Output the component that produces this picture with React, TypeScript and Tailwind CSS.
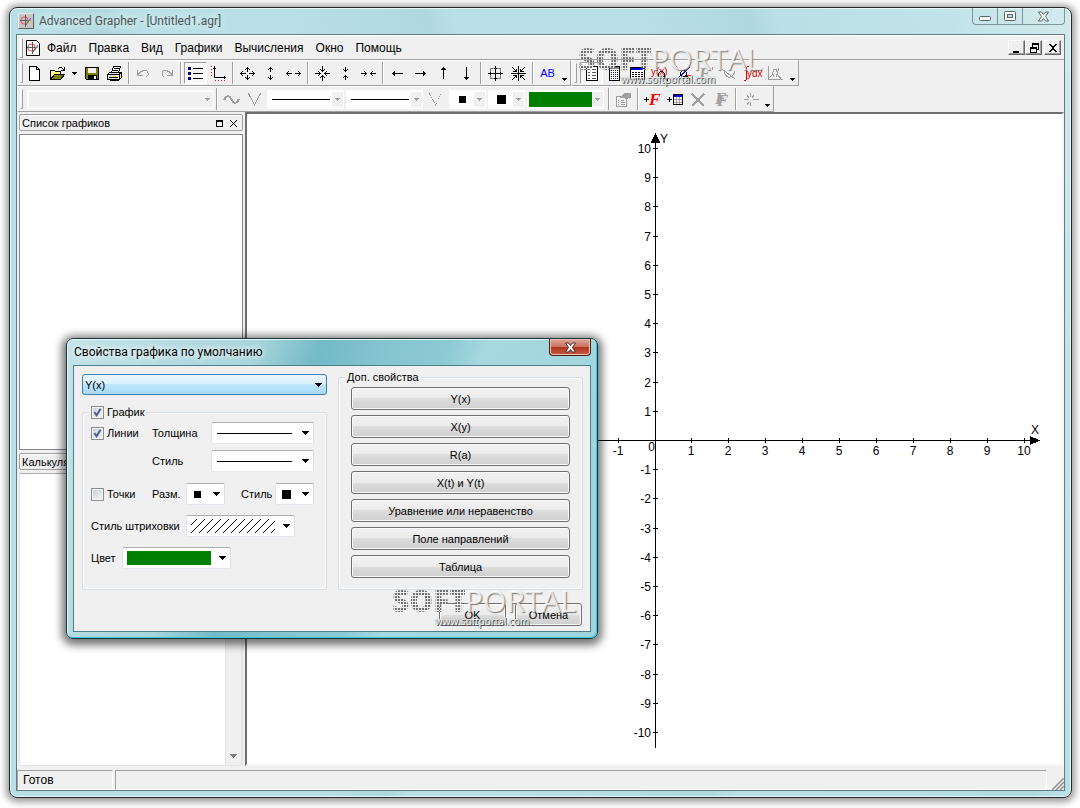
import { useId } from "react";
import type { ReactNode } from "react";

/* ---------- shared pieces ---------- */

function Icon({ children, w = 17, h = 17 }: { children: ReactNode; w?: number; h?: number }) {
  return (
    <svg width={w} height={h} viewBox={`0 0 ${w} ${h}`} fill="none" shapeRendering="crispEdges" aria-hidden="true" className="shrink-0 overflow-visible">
      {children}
    </svg>
  );
}

function Tool({ label, pressed, disabled, children }: { label: string; pressed?: boolean; disabled?: boolean; children: ReactNode }) {
  return (
    <button
      type="button"
      aria-label={label}
      aria-pressed={pressed}
      disabled={disabled}
      className={
        pressed
          ? "flex h-[22px] w-[23px] shrink-0 items-center justify-center border border-t-[#a0a0a0] border-r-white border-b-white border-l-[#a0a0a0] bg-[#f8f8f8]"
          : "flex h-[22px] w-[23px] shrink-0 items-center justify-center"
      }
    >
      {children}
    </button>
  );
}

function MoreButton({ label, low }: { label: string; low?: boolean }) {
  return (
    <button type="button" aria-label={label} className={low ? "flex h-full w-[11px] shrink-0 items-end justify-center pb-1" : "flex h-full w-[11px] shrink-0 items-center justify-center"}>
      <Caret />
    </button>
  );
}

function Caret({ color = "#000" }: { color?: string }) {
  return (
    <Icon w={5} h={3}>
      <path d="M0 0h5v1H0zM1 1h3v1H1zM2 2h1v1H2z" fill={color} />
    </Icon>
  );
}

function BigCaret({ color = "#000" }: { color?: string }) {
  return (
    <Icon w={7} h={4}>
      <path d="M0 0h7v1H0zM1 1h5v1H1zM2 2h3v1H2zM3 3h1v1H3z" fill={color} />
    </Icon>
  );
}

function Sep() {
  return <span className="mx-[2px] h-[22px] w-[2px] shrink-0 border-l border-l-[#a0a0a0] bg-white" />;
}

function Grip() {
  return <span className="h-[20px] w-[3px] shrink-0 border border-t-white border-r-[#a0a0a0] border-b-[#a0a0a0] border-l-white" />;
}

function Toolbar({ label, children }: { label: string; children: ReactNode }) {
  return (
    <div role="toolbar" aria-label={label} className="flex h-[26px] items-center border border-t-white border-r-[#a0a0a0] border-b-[#a0a0a0] border-l-white pl-[2px]">
      <Grip />
      {children}
    </div>
  );
}

/* Flat drop-down used in the graph toolbar. */
function FlatCombo({ label, option, width, empty, children }: { label: string; option: string; width: string; empty?: boolean; children?: ReactNode }) {
  return (
    <label className={`relative flex h-[19px] shrink-0 border-2 border-r ${empty ? "border-white/70 bg-[#f0f0f0]" : "border-white bg-white"} ${width}`}>
      <span className="flex flex-1 items-center justify-center">{children}</span>
      <span className="flex w-[11px] items-center justify-center bg-[#f0f0f0]">
        <Caret color="#a0a0a0" />
      </span>
      <select aria-label={label} disabled className="absolute inset-0 w-full opacity-0">
        <option>{option}</option>
      </select>
    </label>
  );
}

/* Drop-down with a drawn value used in the dialog. */
function DrawnSelect({ id, option, width, children }: { id: string; option: string; width: string; children: ReactNode }) {
  return (
    <div className={`relative flex h-[22px] shrink-0 items-center rounded-[2px] border border-t-[#abadb3] border-r-[#dbdfe6] border-b-[#e3e9ef] border-l-[#e2e3ea] bg-white pr-[4px] ${width}`}>
      <span className="flex flex-1 items-center justify-center pr-[5px]">{children}</span>
      <BigCaret />
      <select id={id} className="absolute inset-0 w-full opacity-0">
        <option>{option}</option>
      </select>
    </div>
  );
}

function CheckBox({ label, checked }: { label: string; checked?: boolean }) {
  return (
    <label className="flex h-[13px] items-center gap-[3px] whitespace-nowrap">
      <span className="relative flex size-[13px]">
        <input
          type="checkbox"
          defaultChecked={checked}
          className="peer size-[13px] appearance-none border border-[#8e8f8f] bg-linear-to-br from-[#cbcfd5] to-[#f6f6f6] shadow-[inset_0_0_0_1px_#f4f4f4]"
        />
        <svg width="13" height="13" viewBox="0 0 13 13" fill="none" className="pointer-events-none absolute inset-0 hidden peer-checked:block" aria-hidden="true">
          <path d="M3.400 6.200 5.600 9.200 9.600 2.800" stroke="#4b6097" strokeWidth="2" />
        </svg>
      </span>
      {label}
    </label>
  );
}

function Watermark() {
  return (
    <div className="pointer-events-none w-[190px] font-['Open_Sans','Noto_Sans',sans-serif] select-none">
      <div className="flex text-[30px] leading-[30px]">
        <span className="w-[73px] bg-[repeating-linear-gradient(90deg,#707070_0_2px,#e4e4e4_2px_3px)] bg-clip-text font-extrabold text-transparent [mask-image:repeating-linear-gradient(0deg,#000_0_2px,transparent_2px_3px)]">
          SOFT
        </span>
        <span className="font-medium text-white/80 [text-shadow:1px_1px_1px_#777]">PORTAL</span>
      </div>
      <div className="-mt-[2px] pl-[43px] text-[10px] leading-[14px] text-white [text-shadow:1px_1px_0_#444,0_0_1px_#666]">www.softportal.com</div>
    </div>
  );
}

/* ---------- icons ---------- */

const K = "#000";
const G = "#a0a0a0";

function AppIcon({ page }: { page?: boolean }) {
  return (
    <svg width="16" height="16" viewBox="0 0 16 16" fill="none" className="shrink-0" aria-hidden="true">
      {page ? (
        <path d="M1.500 .5h10l3 3v12h-13z" fill="#fff" stroke="#000" />
      ) : (
        <>
          <path d="M0 0h16v16H0z" fill="#c6c6c6" />
          <path d="M.5 15.500V.5h15" stroke="#e8e8e8" />
          <path d="M15.500 .5v15H.5" stroke="#5d5d5d" />
        </>
      )}
      <circle cx="6.500" cy="7.500" r="3.500" stroke="#e85a64" strokeWidth="1.200" />
      <path d="M7.500 2v12M2 7.500h11" stroke="#5b5b5b" />
      <path d="m9 11 3-4" stroke="#f0d820" strokeWidth="2" />
      <path d="M8 12l5-7" stroke="#4a50d8" />
    </svg>
  );
}

/* Arrow heads on a 17 px grid. */
const AR = {
  up: "M8 2h1v1H8zM7 3h3v1H7zM6 4h1v1H6zM8 4h1v1H8zM10 4h1v1h-1z",
  down: "M8 14h1v1H8zM7 13h3v1H7zM6 12h1v1H6zM8 12h1v1H8zM10 12h1v1h-1z",
  left: "M1 8h1v1H1zM2 7h1v3H2zM3 6h1v1H3zM3 8h1v1H3zM3 10h1v1H3z",
  right: "M15 8h1v1h-1zM14 7h1v3h-1zM13 6h1v1h-1zM13 8h1v1h-1zM13 10h1v1h-1z",
};

function Letter({ x, y, fill, children }: { x: number; y: number; fill: string; children: string }) {
  return (
    <text x={x} y={y} fill={fill} className="font-['Liberation_Serif',serif] text-[17px] font-bold italic">
      {children}
    </text>
  );
}

const ICONS = {
  fresh: <path d="M3.500 1.500h7l3 3v11h-10zM10.500 1.500v3h3" fill="#fff" stroke={K} />,
  open: (
    <>
      <path d="M1.500 14.500v-9h4l1 1h5v3" fill="#ffff80" stroke={K} />
      <path d="M1.500 14.500 5.500 9.500h10l-4 5z" fill="#808000" stroke={K} />
      <path d="M9 3h1V2h3v1h1v1h1V2h1v4h-4V5h2V4h-1V3h-3v1H9z" fill={K} />
    </>
  ),
  save: (
    <>
      <path d="M2.500 2.500h13v12h-12l-1-1z" fill="#808000" stroke={K} />
      <path d="M5 3h8v5H5z" fill="#efefef" />
      <path d="M5 10h9v5H5z" fill={K} />
      <path d="M11 11h2v3h-2z" fill="#fff" />
    </>
  ),
  print: (
    <>
      <path d="M5.500 7.500 7.500 1.500h7l-2 6" fill="#fff" stroke={K} />
      <path d="M8 3.500h5M7 5.500h5" stroke={K} />
      <path d="M1.500 9.500l2-2h12v5l-2 2h-12z" fill="#e4e4e4" stroke={K} />
      <path d="M2 9.500h11l2-2M13.500 10v4M3 12.500h9" stroke={K} />
      <path d="M7 11h3v1H7z" fill="#e8d800" />
      <path d="M3.500 15.500h9" stroke={K} />
    </>
  ),
  undo: <path d="M2.500 5v5.500H8M3 9.500l3-3 3-1 3 .500 1 2v2l-2 2" stroke={G} />,
  redo: <path d="M14.500 5v5.500H9M14 9.500l-3-3-3-1-3 .500-1 2v2l2 2" stroke={G} />,
  list: (
    <>
      <path d="M1 2h3v3H1zM1 7h3v3H1zM1 12h3v3H1z" fill="#000080" />
      <path d="M6 3.500h10M6 8.500h10M6 13.500h10" stroke={K} />
    </>
  ),
  axes: (
    <>
      <path d="M4.500 1v11.500H16M3.500 3v1M5.500 3v1M14 11.500h1M14 13.500h1" stroke={K} />
      <path d="M1 1h1v1H1zM1 4h1v1H1zM1 7h1v1H1zM1 10h1v1H1zM5 15h1v1H5zM8 15h1v1H8zM11 15h1v1h-1zM14 15h1v1h-1z" fill="#f00" />
    </>
  ),
  expand: (
    <>
      <path d={AR.up + AR.down + AR.left + AR.right} fill={K} />
      <path d="M8 5h1v2H8zM8 10h1v2H8zM4 8h3v1H4zM10 8h3v1h-3z" fill={K} />
    </>
  ),
  expandV: <path d={AR.up + AR.down + "M8 5h1v2H8zM8 10h1v2H8z"} fill={K} />,
  expandH: <path d={AR.left + AR.right + "M4 8h3v1H4zM10 8h3v1h-3z"} fill={K} />,
  shrink: (
    <path
      d="M8 1h1v6H8zM7 5h3v1H7zM6 4h1v1H6zM10 4h1v1h-1zM8 10h1v6H8zM7 11h3v1H7zM6 12h1v1H6zM10 12h1v1h-1zM1 8h6v1H1zM5 7h1v3H5zM4 6h1v1H4zM4 10h1v1H4zM10 8h6v1h-6zM11 7h1v3h-1zM12 6h1v1h-1zM12 10h1v1h-1z"
      fill={K}
    />
  ),
  shrinkV: <path d="M8 2h1v5H8zM7 5h3v1H7zM6 4h1v1H6zM10 4h1v1h-1zM8 10h1v5H8zM7 11h3v1H7zM6 12h1v1H6zM10 12h1v1h-1z" fill={K} />,
  shrinkH: <path d="M1 8h6v1H1zM5 7h1v3H5zM4 6h1v1H4zM4 10h1v1H4zM10 8h6v1h-6zM11 7h1v3h-1zM12 6h1v1h-1zM12 10h1v1h-1z" fill={K} />,
  left: <path d="M3 8h11v1H3zM4 7h1v3H4zM5 6h1v5H5z" fill={K} />,
  right: <path d="M3 8h11v1H3zM12 7h1v3h-1zM11 6h1v5h-1z" fill={K} />,
  up: <path d="M8 2h1v12H8zM7 3h3v1H7zM6 4h5v1H6z" fill={K} />,
  down: <path d="M8 2h1v13H8zM7 13h3v1H7zM6 12h5v1H6z" fill={K} />,
  fit: (
    <>
      <path d="M3.500 3.500h10v10h-10z" stroke="#808080" />
      <path d="M7 3h3v1H7zM7 13h3v1H7zM3 7h1v3H3zM13 7h1v3h-1z" fill={K} />
      <path d="M8.500 1v15M1 8.500h15" stroke={K} />
    </>
  ),
  center: (
    <>
      <path d="M8.500 1v15M1 8.500h15M2 2l4 4M15 2l-4 4M2 15l4-4M15 15l-4-4" stroke={K} />
      <path d="M6 4h1v3H3V6h3zM10 4h1v2h3v1h-4zM3 10h4v3H6v-2H3zM10 10h4v1h-3v2h-1z" fill={K} />
    </>
  ),
  listDoc: (
    <>
      <path d="M3.500 1.500h11v14h-11z" fill="#fff" stroke={K} />
      <path d="M5 4.500h2M9 4.500h4M5 7.500h2M9 7.500h4M5 10.500h2M9 10.500h4M5 13.500h2M9 13.500h4" stroke="#555" />
    </>
  ),
  gridDoc: (
    <>
      <path d="M3.500 1.500h10v14h-10z" fill="#fff" stroke={K} />
      <path d="M4 2h9v2H4z" fill="#808080" />
      <path d="M5 5h1v1H5zM7 5h1v1H7zM9 5h1v1H9zM11 5h1v1h-1zM5 7h1v1H5zM7 7h1v1H7zM9 7h1v1H9zM11 7h1v1h-1zM5 9h1v1H5zM7 9h1v1H7zM9 9h1v1H9zM11 9h1v1h-1zM5 11h1v1H5zM7 11h1v1H7zM9 11h1v1H9zM11 11h1v1h-1zM5 13h1v1H5zM7 13h1v1H7zM9 13h1v1H9zM11 13h1v1h-1z" fill="#0000ff" />
    </>
  ),
  table: (
    <>
      <path d="M1.500 2.500h14v12h-14z" fill="#fff" stroke={K} />
      <path d="M2 3h13v2H2z" fill="#0000d0" />
      <path d="M3 7.500h12M3 9.500h12M3 11.500h12M3 13.500h12" stroke={K} strokeDasharray="2 1" />
    </>
  ),
  calcXY: (
    <>
      <text x="-1" y="10" fill="#e00000" className="text-[10px]">y(x)</text>
      <circle cx="9.500" cy="9.500" r="3" stroke={K} />
      <path d="m12 12 4 4" stroke={K} strokeWidth="2" />
    </>
  ),
  cross: (
    <>
      <path d="m1 15 14-13" stroke="#0000ff" />
      <path d="m1 1 5 5M11 10h5" stroke="#f00" />
      <circle cx="8.500" cy="8.500" r="3" stroke={K} />
      <path d="m11 11 4 4" stroke={K} strokeWidth="2" />
    </>
  ),
  deriv: (
    <>
      <Letter x={1} y={14} fill={G}>F</Letter>
      <path d="M14.500 2v3" stroke={G} />
    </>
  ),
  tangent: <path d="m1 4 13 10M3 7c3 8 9 6 11-1" stroke={G} />,
  integral: (
    <>
      <path d="M4.500 1.500H3.500l-1 1V14l-1 1.500H0" stroke="#e00000" />
      <text x="3" y="12" fill="#e00000" className="text-[10px]">ydx</text>
    </>
  ),
  area: <path d="M1.500 1v13.500H16M2 13l3-3 2-6h2l2 6 3 4M6.500 9v3M9 12l3-9" stroke={G} />,
  wave: <path d="M1 9l2-3 2-1 2 1 3 5 2 1 2-1 2-3" stroke={G} strokeWidth="2" />,
  vee: <path d="M2.500 2.500 8.500 14 14.500 2.500" stroke={G} />,
  veeDots: <path d="M2.500 2.500 8.500 14 14.500 2.500" stroke={G} strokeDasharray="1 1" />,
  props: (
    <>
      <path d="M1.500 5.500h10v10h-10z" stroke={G} />
      <path d="M5 6l4-4 7 0v5h-3l-2 2-2-2H5z" fill={G} />
      <path d="M3 9.500h1M6 9.500h3M3 11.500h1M6 11.500h4M3 13.500h1M6 13.500h4" stroke={G} />
    </>
  ),
  addF: (
    <>
      <path d="M0 8.500h5M2.500 6v5" stroke={K} />
      <Letter x={5} y={14} fill="#f00">F</Letter>
    </>
  ),
  addTable: (
    <>
      <path d="M0 8.500h5M2.500 6v5" stroke={K} />
      <path d="M6.500 3.500h9v10h-9z" fill="#fff" stroke={K} />
      <path d="M7 4h8v2H7z" fill="#0000d0" />
      <path d="M9.500 6v7M12.500 6v7M7 8.500h8M7 11.500h8" stroke="#a0a0a0" />
    </>
  ),
  remove: <path d="m2 3 12 12M14 3 2 15" stroke={G} strokeWidth="2.500" />,
  copyF: (
    <>
      <Letter x={2} y={13} fill={G}>F</Letter>
      <Letter x={4} y={15} fill={G}>F</Letter>
    </>
  ),
  star: <path d="M8.500 2v4M8.500 11v4M2 8.500h5M11 8.500h6M5 4l2 3M12 4l-2 3M7 11l-2 3" stroke={G} />,
};

function LineSample({ w }: { w: string }) {
  return <span className={`h-px bg-black ${w}`} />;
}

/* ---------- window parts ---------- */

const MENU = ["Файл", "Правка", "Вид", "Графики", "Вычисления", "Окно", "Помощь"];

function MenuBar() {
  return (
    <div className="flex h-[25px] items-center border-t border-b border-t-white border-b-[#a0a0a0] pr-[3px] pl-[3px]">
      <Grip />
      <span className="mr-[6px] ml-[2px]">
        <AppIcon page />
      </span>
      <nav className="flex flex-1 gap-3 text-[12px]">
        {MENU.map((m) => (
          <button key={m} type="button">
            {m}
          </button>
        ))}
      </nav>
      <div className="flex">
        {[
          { l: "Свернуть документ", d: "M3 9h6v2H3z" },
          { l: "Восстановить документ", d: "M5 1h7v2H5zM5 3h1v2H5zM11 3h1v5h-2V7h1zM3 5h7v2H3zM3 7h1v4H3zM9 7h1v4H9zM3 10h7v1H3z" },
          { l: "Закрыть документ", d: "M3 2h2v1h1v1h2V3h1V2h2v1h-1v1H9v1H8v2h1v1h1v1h1v1H9V9H8V8H6v1H5v1H3V9h1V8h1V7h1V5H5V4H4V3H3z" },
        ].map((b, i) => (
          <button
            key={b.l}
            type="button"
            aria-label={b.l}
            className={`flex h-[15px] w-[17px] items-center justify-center border border-t-white border-r-[#696969] border-b-[#696969] border-l-white shadow-[inset_-1px_-1px_0_#a0a0a0] ${i === 2 ? "ml-[2px]" : ""}`}
          >
            <Icon w={14} h={12}>
              <path d={b.d} fill="#000" />
            </Icon>
          </button>
        ))}
      </div>
    </div>
  );
}

function ToolRows() {
  return (
    <div>
      <div className="flex">
        <Toolbar label="Стандартная">
          <Tool label="Новый"><Icon>{ICONS.fresh}</Icon></Tool>
          <Tool label="Открыть"><Icon>{ICONS.open}</Icon></Tool>
          <MoreButton label="Недавние файлы" />
          <Tool label="Сохранить"><Icon>{ICONS.save}</Icon></Tool>
          <Tool label="Печать"><Icon>{ICONS.print}</Icon></Tool>
          <Sep />
          <Tool label="Отменить" disabled><Icon>{ICONS.undo}</Icon></Tool>
          <Tool label="Вернуть" disabled><Icon>{ICONS.redo}</Icon></Tool>
          <Sep />
          <Tool label="Список графиков" pressed><Icon>{ICONS.list}</Icon></Tool>
          <Tool label="Оси"><Icon>{ICONS.axes}</Icon></Tool>
          <Sep />
          <Tool label="Увеличить"><Icon>{ICONS.expand}</Icon></Tool>
          <Tool label="Увеличить по Y"><Icon>{ICONS.expandV}</Icon></Tool>
          <Tool label="Увеличить по X"><Icon>{ICONS.expandH}</Icon></Tool>
          <Sep />
          <Tool label="Уменьшить"><Icon>{ICONS.shrink}</Icon></Tool>
          <Tool label="Уменьшить по Y"><Icon>{ICONS.shrinkV}</Icon></Tool>
          <Tool label="Уменьшить по X"><Icon>{ICONS.shrinkH}</Icon></Tool>
          <Sep />
          <Tool label="Влево"><Icon>{ICONS.left}</Icon></Tool>
          <Tool label="Вправо"><Icon>{ICONS.right}</Icon></Tool>
          <Tool label="Вверх"><Icon>{ICONS.up}</Icon></Tool>
          <Tool label="Вниз"><Icon>{ICONS.down}</Icon></Tool>
          <Sep />
          <Tool label="Стандартный масштаб"><Icon>{ICONS.fit}</Icon></Tool>
          <Tool label="Центрировать"><Icon>{ICONS.center}</Icon></Tool>
          <Sep />
          <Tool label="Надпись">
            <span className="text-[11px] text-[#0000ff]">AB</span>
          </Tool>
          <MoreButton label="Другие кнопки" low />
        </Toolbar>
        <Toolbar label="Вычисления">
          <span className="ml-[3px] flex">
            <Tool label="Список" pressed><Icon>{ICONS.listDoc}</Icon></Tool>
            <Tool label="Калькулятор"><Icon>{ICONS.gridDoc}</Icon></Tool>
            <Tool label="Таблица"><Icon>{ICONS.table}</Icon></Tool>
            <Tool label="Вычислить"><Icon>{ICONS.calcXY}</Icon></Tool>
            <Tool label="Пересечение"><Icon>{ICONS.cross}</Icon></Tool>
            <Tool label="Производная" disabled><Icon>{ICONS.deriv}</Icon></Tool>
            <Tool label="Касательная" disabled><Icon>{ICONS.tangent}</Icon></Tool>
            <Tool label="Интеграл"><Icon>{ICONS.integral}</Icon></Tool>
            <Tool label="Регрессия" disabled><Icon>{ICONS.area}</Icon></Tool>
          </span>
          <MoreButton label="Другие кнопки вычислений" low />
        </Toolbar>
      </div>
      <div className="flex">
        <Toolbar label="График">
          <span className="ml-1 flex">
            <FlatCombo label="Текущий график" option="Нет графиков" width="w-[187px]" empty />
          </span>
          <Sep />
          <Tool label="Гладкая линия" disabled><Icon>{ICONS.wave}</Icon></Tool>
          <Tool label="Ломаная" disabled><Icon>{ICONS.vee}</Icon></Tool>
          <span className="flex gap-[2px] px-px">
            <FlatCombo label="Толщина линии" option="1" width="w-[77px]"><LineSample w="w-[58px]" /></FlatCombo>
            <FlatCombo label="Стиль линии" option="Сплошная" width="w-[77px]"><LineSample w="w-[58px]" /></FlatCombo>
          </span>
          <Tool label="Точки" disabled><Icon>{ICONS.veeDots}</Icon></Tool>
          <span className="flex gap-[2px] px-[2px]">
            <FlatCombo label="Размер точек" option="7" width="w-[37px]"><span className="size-[7px] bg-black" /></FlatCombo>
            <FlatCombo label="Стиль точек" option="Квадрат" width="w-[37px]"><span className="size-[9px] bg-black" /></FlatCombo>
            <FlatCombo label="Цвет линии" option="Зелёный" width="w-[77px]"><span className="h-full flex-1 bg-[#008000]" /></FlatCombo>
          </span>
          <Sep />
          <Tool label="Свойства" disabled><Icon>{ICONS.props}</Icon></Tool>
          <Sep />
          <Tool label="Добавить график"><Icon>{ICONS.addF}</Icon></Tool>
          <Tool label="Добавить таблицу"><Icon>{ICONS.addTable}</Icon></Tool>
          <Tool label="Удалить" disabled><Icon>{ICONS.remove}</Icon></Tool>
          <Tool label="Дублировать" disabled><Icon>{ICONS.copyF}</Icon></Tool>
          <Sep />
          <Tool label="Трассировка" disabled><Icon>{ICONS.star}</Icon></Tool>
          <MoreButton label="Другие кнопки графика" low />
        </Toolbar>
      </div>
    </div>
  );
}

function PaneHeader({ title }: { title: string }) {
  return (
    <div className="flex h-[17px] items-center rounded-[2px] border border-[#a0a0a0] pt-px pr-[2px] pl-[2px] text-[11px] shadow-[inset_1px_1px_0_#fff]">
      <span className="flex-1">{title}</span>
      <button type="button" aria-label={`Развернуть: ${title}`} className="flex w-[14px] justify-center">
        <Icon w={7} h={7}><path d="M.5 .5h6v6h-6zM0 1.500h7" stroke="#000" /></Icon>
      </button>
      <button type="button" aria-label={`Закрыть: ${title}`} className="flex w-[14px] justify-center">
        <Icon w={7} h={7}>
          <path d="M0 0h1v1H0zM1 1h1v1H1zM2 2h1v1H2zM3 3h1v1H3zM4 4h1v1H4zM5 5h1v1H5zM6 6h1v1H6zM6 0h1v1H6zM5 1h1v1H5zM4 2h1v1H4zM2 4h1v1H2zM1 5h1v1H1zM0 6h1v1H0z" fill="#000" />
        </Icon>
      </button>
    </div>
  );
}

function SidePanes() {
  return (
    <aside className="flex w-[228px] shrink-0 flex-col gap-[3px] px-[2px] pt-[2px]">
      <PaneHeader title="Список графиков" />
      <div className="h-[316px] border border-[#828790] bg-white" />
      <PaneHeader title="Калькулятор" />
      <div className="flex flex-1 justify-end border border-[#e3e3e8] border-t-[#abadb3] bg-white">
        <div className="flex w-[17px] flex-col justify-end border-x border-[#e4e4e4] bg-[#f0f0f0] pb-[7px]">
          <span className="flex justify-center">
            <BigCaret color="#7a7a7a" />
          </span>
        </div>
      </div>
    </aside>
  );
}

const UNITS = [1, 2, 3, 4, 5, 6, 7, 8, 9, 10];

function Plot() {
  const ox = 408;
  const oy = 326;
  const px = (n: number) => Math.round(ox - 0.5 + n * 36.9);
  const py = (n: number) => Math.round(oy - n * 29.2);
  return (
    <svg width="815" height="650" viewBox="0 0 815 650" shapeRendering="crispEdges" className="block" aria-label="Координатная плоскость">
      <g fill="#000">
        <rect x="40" y={oy} width="746" height="1" />
        <rect x={ox} y="20" width="1" height="614" />
        <path d="M793 326.500l-10-4.500v9z" />
        <path d="M408.500 19l5 10h-10z" />
        {[-10, -9, -8, -7, -6, -5, -4, -3, -2, -1, ...UNITS].map((n) => (
          <rect key={`y${n}`} x={ox - 2} y={py(n)} width="5" height="1" />
        ))}
        {[-1, ...UNITS].map((n) => (
          <rect key={`x${n}`} x={px(n)} y={oy - 2} width="1" height="5" />
        ))}
      </g>
      <g className="fill-black text-[12px]">
        <text x="413" y="29">Y</text>
        <text x="784" y="320">X</text>
        <text x="408" y="337" textAnchor="end">0</text>
        {UNITS.map((n) => (
          <text key={`ty${n}`} x="404" y={py(n) + 5} textAnchor="end">{n}</text>
        ))}
        {UNITS.map((n) => (
          <text key={`ny${n}`} x="404" y={py(-n) + 5} textAnchor="end">{`-${n}`}</text>
        ))}
        <text x={px(-1)} y="341" textAnchor="middle">-1</text>
        {UNITS.map((n) => (
          <text key={`tx${n}`} x={px(n)} y="341" textAnchor="middle">{n}</text>
        ))}
      </g>
    </svg>
  );
}

/* ---------- dialog ---------- */

const PLOT_TYPES = ["Y(x)", "X(y)", "R(a)", "X(t) и Y(t)", "Уравнение или неравенство", "Поле направлений", "Таблица"];

const PUSH =
  "rounded-[3px] border border-[#707070] bg-[linear-gradient(#f2f2f2,#ebebeb_50%,#dddddd_50%,#cfcfcf)] pt-[2px] shadow-[inset_0_0_0_1px_#fafafa]";

function Dialog() {
  const uid = useId();
  return (
    <section
      role="dialog"
      aria-labelledby={`${uid}-title`}
      className="absolute top-[338px] left-[66px] w-[532px] rounded-[7px] border border-[#17353b] bg-[linear-gradient(110deg,#c3e4e8_0%,#a8d5dc_30%,#74bac7_40%,#86c6d1_52%,#8ccad4_60%,#a5d8df_66%,#9fd4dc_100%)] p-[6px] pt-0 shadow-[0_2px_9px_4px_rgba(0,0,0,0.55),inset_1px_1px_0_#e8f8fa,inset_-1px_-1px_0_#35cbe8]"
    >
      <header className="flex h-[26px] justify-between">
        <h2 id={`${uid}-title`} className="pl-[1px] font-[Roboto,'Noto_Sans',sans-serif] text-[12px] leading-[26px] text-black [text-shadow:0_0_6px_#fff,0_0_6px_#fff]">
          Свойства графика по умолчанию
        </h2>
        <button
          type="button"
          aria-label="Закрыть"
          className="flex h-[17px] w-[42px] items-center justify-center rounded-b-[4px] border border-t-0 border-[#4a1d17] bg-[linear-gradient(#e0a79b,#cc7260_48%,#ae3520_50%,#c65a40)] shadow-[inset_0_0_0_1px_#f0c0b4]"
        >
          <CloseGlyph stroke="#5a2a2a" />
        </button>
      </header>
      <div className="border border-[#4c7f88] bg-[#f0f0f0] pt-2 pr-[7px] pb-[5px] pl-2 text-[11px] leading-[13px]">
        <div className="flex gap-[11px]">
          <div className="flex w-[245px] flex-col gap-[11px]">
            <div className="relative">
              <select aria-label="Тип графика" className="h-[21px] w-full appearance-none rounded-[3px] border border-[#3c7fb1] bg-[linear-gradient(#eaf6fd,#d9f0fc_50%,#bee6fd_50%,#a7d9f5)] pl-[2px] text-[11px] leading-[20px]">
                {PLOT_TYPES.map((t) => (
                  <option key={t}>{t}</option>
                ))}
              </select>
              <span className="pointer-events-none absolute top-[9px] right-[5px]">
                <BigCaret />
              </span>
            </div>
            <fieldset className="min-w-0 flex-1 rounded-[3px] border border-[#d5dfe5] px-2 shadow-[inset_0_0_0_1px_#fbfbfb]">
              <legend className="-ml-[2px] bg-[#f0f0f0] px-[2px]">
                <CheckBox label="График" checked />
              </legend>
              <div className="grid grid-cols-[61px_59px_1fr] items-center gap-y-[6px] pt-[3px] pr-1">
                <CheckBox label="Линии" checked />
                <label htmlFor={`${uid}-w`}>Толщина</label>
                <DrawnSelect id={`${uid}-w`} option="1" width="w-[103px]"><LineSample w="w-[75px]" /></DrawnSelect>
                <label htmlFor={`${uid}-s`} className="col-start-2">Стиль</label>
                <DrawnSelect id={`${uid}-s`} option="Сплошная" width="w-[103px]"><LineSample w="w-[75px]" /></DrawnSelect>
              </div>
              <div className="mt-[11px] flex items-center">
                <div className="w-[61px]"><CheckBox label="Точки" /></div>
                <label htmlFor={`${uid}-ps`} className="w-[34px]">Разм.</label>
                <DrawnSelect id={`${uid}-ps`} option="7" width="w-[39px]"><span className="size-[7px] bg-black" /></DrawnSelect>
                <label htmlFor={`${uid}-pt`} className="w-[50px] pl-[16px]">Стиль</label>
                <DrawnSelect id={`${uid}-pt`} option="Квадрат" width="w-[39px]"><span className="size-[9px] bg-black" /></DrawnSelect>
              </div>
              <div className="mt-[10px] flex items-center">
                <label htmlFor={`${uid}-h`} className="w-[95px] whitespace-nowrap">Стиль штриховки</label>
                <DrawnSelect id={`${uid}-h`} option="Диагональ" width="w-[109px]">
                  <svg width="84" height="14" viewBox="0 0 84 14" shapeRendering="crispEdges" aria-hidden="true">
                    <path d="M0 6 6 0M0 14 14 0M8 14 22 0M16 14 30 0M24 14 38 0M32 14 46 0M40 14 54 0M48 14 62 0M56 14 70 0M64 14 78 0M72 14 84 2M80 14l4-4" stroke="#000" strokeWidth="1" fill="none" />
                  </svg>
                </DrawnSelect>
              </div>
              <div className="mt-[10px] flex items-center">
                <label htmlFor={`${uid}-c`} className="w-[31px]">Цвет</label>
                <DrawnSelect id={`${uid}-c`} option="Зелёный" width="w-[109px]"><span className="h-[14px] w-[84px] bg-[#008000]" /></DrawnSelect>
              </div>
            </fieldset>
          </div>
          <fieldset className="-mt-[3px] min-w-0 flex-1 rounded-[3px] border border-[#d5dfe5] px-3 pb-[11px] shadow-[inset_0_0_0_1px_#fbfbfb]">
            <legend className="-ml-[6px] bg-[#f0f0f0] px-[2px]">Доп. свойства</legend>
            <div className="flex flex-col gap-[5px] pt-[3px]">
              {PLOT_TYPES.map((t) => (
                <button key={t} type="button" className={`h-[23px] ${PUSH}`}>
                  {t}
                </button>
              ))}
            </div>
          </fieldset>
        </div>
        <div className="mt-[13px] flex justify-end gap-[9px] pr-px">
          <button type="button" className={`h-[23px] w-[67px] ${PUSH}`}>OK</button>
          <button type="button" className={`h-[23px] w-[67px] ${PUSH}`}>Отмена</button>
        </div>
      </div>
      <div className="absolute top-[247px] left-[325px]">
        <Watermark />
      </div>
    </section>
  );
}

function CloseGlyph({ stroke }: { stroke: string }) {
  return (
    <svg width="13" height="11" viewBox="0 0 13 11" fill="none" aria-hidden="true">
      <path d="M1.500 1h3l2 2.500 2-2.500h3L8.500 5.500l3 4.500h-3l-2-2.500-2 2.500h-3l3-4.500z" fill="#f6f8f9" stroke={stroke} />
    </svg>
  );
}

export default function App() {
  return (
    <div className="flex min-h-screen bg-white pt-[7px] pr-2 pb-[10px] pl-[9px] font-['Liberation_Sans',Arial,sans-serif] text-black">
      <div className="relative flex flex-1 flex-col rounded-[8px] border border-[#22282a] bg-[linear-gradient(70deg,#b7dfe5_0%,#b7dfe5_24%,#aed7dd_28%,#b9e0e6_30%,#b7dfe5_42%,#b0d9df_52%,#b9e0e6_54%,#b7dfe5_68%,#b0d9df_76%,#b9e0e6_78%,#c0e3e8_90%,#d3eaed_100%)] px-[6px] pb-[6px] shadow-[0_1px_7px_3px_rgba(0,0,0,0.4),inset_0_0_0_1px_#e6f5f7]">
        <header className="flex h-[26px] shrink-0 justify-between">
          <div className="flex items-center gap-[5px] pl-[2px]">
            <AppIcon />
            <h1 className="font-[Roboto,'Noto_Sans',sans-serif] text-[12px] text-[#4a5558] [text-shadow:0_0_8px_#e6f3f5,0_0_8px_#e6f3f5]">Advanced Grapher - [Untitled1.agr]</h1>
          </div>
          <div className="flex h-[17px] divide-x divide-[#7d9499] rounded-b-[4px] border border-t-0 border-[#7d9499]">
            <button type="button" aria-label="Свернуть" className="flex w-[25px] items-center justify-center pt-1">
              <svg width="12" height="5" viewBox="0 0 12 5" aria-hidden="true"><rect x=".5" y=".5" width="11" height="4" rx="1" fill="#fff" stroke="#5b6468" /></svg>
            </button>
            <button type="button" aria-label="Развернуть" className="flex w-[25px] items-center justify-center">
              <svg width="12" height="10" viewBox="0 0 12 10" aria-hidden="true">
                <rect x=".5" y=".5" width="11" height="9" rx="1" fill="#fff" stroke="#5b6468" />
                <rect x="3.500" y="3.500" width="5" height="3" fill="#b7dde2" stroke="#5b6468" />
              </svg>
            </button>
            <button type="button" aria-label="Закрыть программу" className="flex w-[41px] items-center justify-center">
              <CloseGlyph stroke="#5b6468" />
            </button>
          </div>
        </header>
        <div className="flex flex-1 flex-col border border-[#5f7e84] bg-[#f0f0f0]">
          <MenuBar />
          <ToolRows />
          <div className="flex flex-1">
            <SidePanes />
            <main className="min-w-0 flex-1 overflow-hidden border-2 border-t-[#6e6e6e] border-r-[#f7f7f7] border-b-[#f7f7f7] border-l-[#6e6e6e] bg-white">
              <Plot />
            </main>
          </div>
          <footer className="flex h-[24px] shrink-0 items-stretch gap-[2px] pt-[4px] text-[12px]">
            <span className="flex w-[96px] items-center border border-t-[#a0a0a0] border-r-white border-b-white border-l-[#a0a0a0] pl-[5px]">Готов</span>
            <span className="flex-1 border border-t-[#a0a0a0] border-r-white border-b-white border-l-[#a0a0a0]" />
            <span className="flex w-[15px] items-end justify-end">
              <svg width="12" height="12" viewBox="0 0 12 12" aria-hidden="true"><path d="M0 12 12 0M4 12l8-8M8 12l4-4" stroke="#909090" strokeWidth="1.500" /></svg>
            </span>
          </footer>
        </div>
        <div className="absolute top-[36px] left-[568px]">
          <Watermark />
        </div>
      </div>
      <Dialog />
    </div>
  );
}
